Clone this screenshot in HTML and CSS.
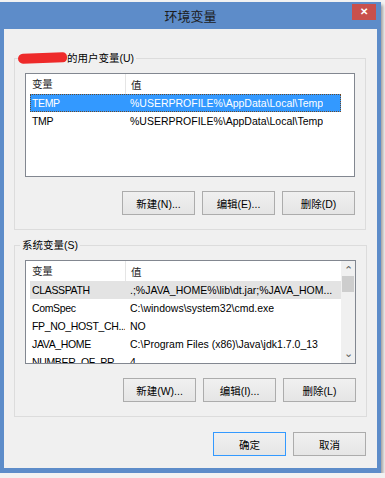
FILE: index.html
```html
<!DOCTYPE html>
<html lang="zh-CN">
<head>
    <meta charset="UTF-8">
    <title>环境变量</title>
    <link rel="stylesheet" href="styles.css">
</head>
<body>
    <div class="window">
        <div class="titlebar">
            <span></span>
            <span class="title">环境变量</span>
            <button class="close">✕</button>
        </div>
        <div class="client">
            <fieldset class="group">
                <legend><span class="scribble"></span>的用户变量(U)</legend>
                <div class="list">
                    <div class="rows">
                        <div class="list-head"><span class="c1">变量</span><span class="c2">值</span></div>
                        <div class="row selected"><span class="c1">TEMP</span><span class="c2">%USERPROFILE%\AppData\Local\Temp</span></div>
                        <div class="row"><span class="c1">TMP</span><span class="c2">%USERPROFILE%\AppData\Local\Temp</span></div>
                    </div>
                </div>
                <div class="buttons">
                    <button class="btn">新建(N)...</button>
                    <button class="btn">编辑(E)...</button>
                    <button class="btn">删除(D)</button>
                </div>
            </fieldset>

            <fieldset class="group system">
                <legend>系统变量(S)</legend>
                <div class="list">
                    <div class="rows">
                        <div class="list-head"><span class="c1">变量</span><span class="c2">值</span></div>
                        <div class="row inactive"><span class="c1">CLASSPATH</span><span class="c2">.;%JAVA_HOME%\lib\dt.jar;%JAVA_HOM...</span></div>
                        <div class="row"><span class="c1">ComSpec</span><span class="c2">C:\windows\system32\cmd.exe</span></div>
                        <div class="row"><span class="c1">FP_NO_HOST_CH...</span><span class="c2">NO</span></div>
                        <div class="row"><span class="c1">JAVA_HOME</span><span class="c2">C:\Program Files (x86)\Java\jdk1.7.0_13</span></div>
                        <div class="row"><span class="c1">NUMBER_OF_PR...</span><span class="c2">4</span></div>
                    </div>
                    <div class="scrollbar">
                        <div class="arrow">&#8963;</div>
                        <div class="thumb"></div>
                        <div class="track"></div>
                        <div class="arrow down">&#8964;</div>
                    </div>
                </div>
                <div class="buttons">
                    <button class="btn">新建(W)...</button>
                    <button class="btn">编辑(I)...</button>
                    <button class="btn">删除(L)</button>
                </div>
            </fieldset>

            <div class="buttons dialog-buttons">
                <button class="btn default">确定</button>
                <button class="btn">取消</button>
            </div>
        </div>
    </div>
</body>
</html>
```

FILE: styles.css
```css
body {
    margin: 0;
    background-color: #f2f2f2;
    font-family: 'Liberation Sans', 'Noto Sans CJK SC', sans-serif;
    font-size: 10.5px;
    color: #000;
}
.window {
    width: 373px;
    margin-top: 2px;
    padding: 0 4px 5px;
    background-color: #5d8cc9;
    box-shadow: 2px 3px 3px rgba(0, 0, 0, 0.35);
}
.titlebar {
    height: 27px;
    display: grid;
    grid-template-columns: 1fr auto 1fr;
    align-items: center;
}
.title {
    font-family: 'Noto Sans CJK SC', sans-serif;
    font-size: 13px;
    color: #1c1c1c;
}
.close {
    justify-self: end;
    align-self: start;
    margin: 2px 1px 0 0;
    width: 24px;
    height: 16px;
    padding: 0;
    border: none;
    background-color: #c9504c;
    color: #fff;
    font-size: 10px;
    font-weight: bold;
    line-height: 16px;
}
.client {
    background-color: #f0f0f0;
    padding: 21px 11px 12px 10px;
}
.group {
    margin: 0;
    padding: 7px 10px 14px;
    border: 1px solid #dcdcdc;
}
.group.system {
    margin-top: 7px;
}
.group legend {
    margin-left: -5px;
    padding: 0 2px;
    line-height: 16px;
}
.scribble {
    display: inline-block;
    width: 49px;
    height: 10px;
    margin-left: -4px;
    border-radius: 6px 5px 5px 6px;
    background-color: #ee2a2a;
    vertical-align: -1px;
    transform: rotate(-2deg);
}
.list {
    height: 102px;
    border: 1px solid #828790;
    background-color: #fff;
    display: flex;
    overflow: hidden;
}
.rows {
    flex: 1;
    padding-left: 4px;
}
.list-head,
.row {
    display: flex;
    width: 311px;
    white-space: nowrap;
}
.list-head {
    height: 20px;
    align-items: center;
    color: #1e1e1e;
}
.list-head .c1 {
    border-right: 1px solid #e5e5e5;
    height: 20px;
    line-height: 20px;
}
.row {
    height: 18px;
    line-height: 18px;
}
.c1 {
    width: 93px;
    padding-left: 2px;
    overflow: hidden;
    letter-spacing: -0.35px;
}
.c2 {
    padding-left: 5px;
    overflow: hidden;
}
.row.selected {
    background-color: #3399ff;
    color: #fff;
    outline: 1px dotted #6b4a2a;
    outline-offset: -1px;
}
.row.inactive {
    background-color: #e3e3e3;
}
.scrollbar {
    width: 14px;
    display: flex;
    flex-direction: column;
    background-color: #f0f0f0;
}
.arrow {
    height: 15px;
    text-align: center;
    font-size: 11px;
    line-height: 18px;
    color: #606060;
}
.arrow.down {
    line-height: 10px;
}
.thumb {
    height: 16px;
    margin: 0 1px;
    background-color: #cdcdcd;
}
.track {
    flex: 1;
}
.buttons {
    display: flex;
    justify-content: flex-end;
    gap: 7px;
    margin-top: 14px;
}
.btn {
    width: 73px;
    height: 24px;
    padding: 0;
    border: 1px solid #acacac;
    background: linear-gradient(#f0f0f0, #e5e5e5);
    font-family: inherit;
    font-size: 10.5px;
    color: #000;
}
.btn.default {
    border-color: #3399ff;
}
.dialog-buttons {
    margin-top: 15px;
}
```
